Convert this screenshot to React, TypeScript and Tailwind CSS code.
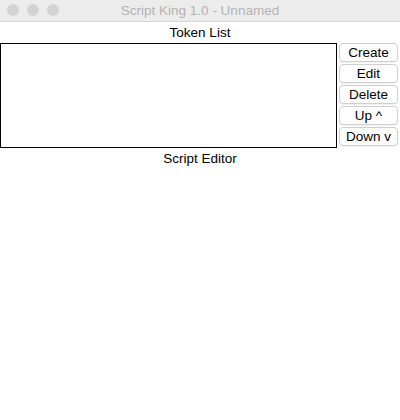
const BUTTONS = ["Create", "Edit", "Delete", "Up ^", "Down v"];

export default function App() {
  return (
    <div className="flex h-[420px] w-[400px] flex-col bg-white font-['Liberation_Sans',Arial,sans-serif] text-[13.5px] text-black">
      {/* Title bar */}
      <div className="relative flex h-[22px] shrink-0 items-center justify-center border-b border-[#d6d6d6] bg-[#ececec]">
        <div className="absolute left-[7px] top-[4px] flex gap-[8px]">
          <span className="h-[12px] w-[12px] rounded-full bg-[#d3d3d3]" />
          <span className="h-[12px] w-[12px] rounded-full bg-[#d3d3d3]" />
          <span className="h-[12px] w-[12px] rounded-full bg-[#d3d3d3]" />
        </div>
        <span className="text-[13.5px] leading-none text-[#b3b3b3]">Script King 1.0 - Unnamed</span>
      </div>

      <div className="flex h-[21px] items-center justify-center leading-none">Token List</div>

      <div className="flex">
        <div className="h-[105px] w-[337px] border border-black bg-white" />
        <div className="flex flex-1 flex-col gap-[2px] pl-[2px] pr-[2px]">
          {BUTTONS.map((b) => (
            <button
              key={b}
              className="flex h-[19px] items-center justify-center rounded-[4px] border border-[#cfcfcf] bg-white leading-none shadow-[0_1px_0_rgba(0,0,0,0.05)]"
            >
              {b}
            </button>
          ))}
        </div>
      </div>

      <div className="flex h-[21px] items-center justify-center leading-none">Script Editor</div>
    </div>
  );
}
